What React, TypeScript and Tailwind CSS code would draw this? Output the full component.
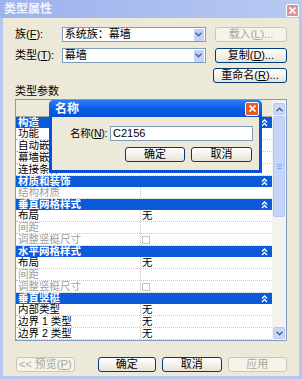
import React from "react";

const font = { fontFamily: '"Liberation Sans", "Noto Sans CJK SC", sans-serif' };

function Key({ k }: { k: string }) {
  return (
    <>
      (<span className="underline">{k}</span>)
    </>
  );
}

function XPButton({
  children,
  disabled,
  className = "",
}: {
  children: React.ReactNode;
  disabled?: boolean;
  className?: string;
}) {
  return (
    <div
      className={
        "flex h-[15px] items-center justify-center whitespace-nowrap rounded-[3px] border text-[11px] leading-none " +
        (disabled
          ? "border-[#c9c7ba] bg-[#f5f4ea] text-[#aca899] "
          : "border-[#003c74] bg-gradient-to-b from-white to-[#e6e3d6] text-black ") +
        className
      }
    >
      {children}
    </div>
  );
}

function ChevronDown({ className = "" }: { className?: string }) {
  return (
    <svg width="7" height="5" viewBox="0 0 7 5" className={className}>
      <path d="M0.5 0.8 L3.5 3.8 L6.5 0.8" stroke="#4d6185" strokeWidth="1.4" fill="none" />
    </svg>
  );
}

function Combo({ value }: { value: string }) {
  return (
    <div className="flex h-[15px] w-[148px] items-center border border-[#7f9db9] bg-white">
      <span className="flex-1 whitespace-nowrap pl-[2px] text-[11px] leading-none">{value}</span>
      <div className="mr-px flex h-[12px] w-[10px] items-center justify-center rounded-[1px] bg-[#c1d3fb]">
        <ChevronDown />
      </div>
    </div>
  );
}

function Collapse() {
  return (
    <svg width="7" height="8" viewBox="0 0 7 8">
      <path d="M1 3.5 L3.5 1 L6 3.5 M1 7 L3.5 4.5 L6 7" stroke="white" strokeWidth="1.3" fill="none" />
    </svg>
  );
}

function Section({ title }: { title: string }) {
  return (
    <div className="flex h-[11px] shrink-0 items-center justify-between bg-[#0b5ad9] pl-[2px] pr-[4px] text-[10.5px] font-bold leading-none text-white">
      <span className="whitespace-nowrap">{title}</span>
      <Collapse />
    </div>
  );
}

function Row({
  name,
  value,
  gray,
  check,
}: {
  name: string;
  value?: string;
  gray?: boolean;
  check?: boolean;
}) {
  return (
    <div className="flex h-[12px] shrink-0 border-b border-dotted border-[#c8c8c8] bg-white text-[10.5px] leading-none">
      <div
        className={
          "flex w-[125px] items-center whitespace-nowrap border-r border-dotted border-[#c8c8c8] pl-[2px] " +
          (gray ? "text-[#a0a0a0]" : "text-black")
        }
      >
        {name}
      </div>
      <div className="flex flex-1 items-center pl-[1px]">
        {check ? (
          <div className="h-[8px] w-[8px] border border-[#c4c4c4] bg-white" />
        ) : (
          <span>{value}</span>
        )}
      </div>
    </div>
  );
}

function CloseGlyph() {
  return (
    <svg width="7" height="7" viewBox="0 0 7 7">
      <path d="M0.5 0.5 L6.5 6.5 M6.5 0.5 L0.5 6.5" stroke="white" strokeWidth="1.6" />
    </svg>
  );
}

export default function App() {
  return (
    <div
      className="relative flex h-[379px] w-[302px] flex-col overflow-hidden bg-[#ece9d8] text-black"
      style={font}
    >
      {/* title bar */}
      <div className="flex h-[18px] shrink-0 items-center justify-between bg-gradient-to-r from-[#9db3ea] via-[#a9bdf0] to-[#b8c9f2] pl-[4px] pr-[3px]">
        <span className="text-[12px] font-bold leading-none text-[#f0f4ff]">类型属性</span>
        <div className="mt-[2px] flex h-[13px] w-[13px] items-center justify-center rounded-[2px] border border-white bg-[#d29797]">
          <CloseGlyph />
        </div>
      </div>

      <div className="flex flex-1 flex-col border-x-[3px] border-b-[3px] border-[#b6c6ef] px-[12px]">
        {/* family row */}
        <div className="mt-[9px] flex h-[15px] items-center">
          <span className="w-[48px] whitespace-nowrap text-[11px] leading-none">
            族<Key k="F" />:
          </span>
          <Combo value="系统族：幕墙" />
          <XPButton disabled className="ml-[9px] w-[74px]">
            载入<Key k="L" />...
          </XPButton>
        </div>
        {/* type row */}
        <div className="mt-[6px] flex h-[15px] items-center">
          <span className="w-[48px] whitespace-nowrap text-[11px] leading-none">
            类型<Key k="T" />:
          </span>
          <Combo value="幕墙" />
          <XPButton className="ml-[9px] w-[74px]">
            复制<Key k="D" />...
          </XPButton>
        </div>
        <div className="mt-[5px] flex justify-end">
          <XPButton className="w-[74px]">
            重命名<Key k="R" />...
          </XPButton>
        </div>
        <div className="mt-[1px] text-[11px] leading-[14px]">类型参数</div>

        {/* property table */}
        <div className="mt-[1px] flex h-[242px] border border-[#7f9db9] bg-white">
          <div className="flex flex-1 flex-col overflow-hidden">
            <div className="flex h-[17px] shrink-0 border-b border-[#aca899] bg-[#ece9d8]">
              <div className="w-[125px] border-r border-[#d4d0c8]" />
              <div className="flex-1" />
            </div>
            <Section title="构造" />
            <Row name="功能" />
            <Row name="自动嵌入" />
            <Row name="幕墙嵌板" />
            <Row name="连接条件" />
            <Section title="材质和装饰" />
            <Row name="结构材质" gray />
            <Section title="垂直网格样式" />
            <Row name="布局" value="无" />
            <Row name="间距" gray />
            <Row name="调整竖梃尺寸" gray check />
            <Section title="水平网格样式" />
            <Row name="布局" value="无" />
            <Row name="间距" gray />
            <Row name="调整竖梃尺寸" gray check />
            <Section title="垂直竖梃" />
            <Row name="内部类型" value="无" />
            <Row name="边界 1 类型" value="无" />
            <Row name="边界 2 类型" value="无" />
          </div>
          {/* scrollbar */}
          <div className="flex w-[14px] flex-col bg-[#f4f3ee] p-px">
            <div className="mt-[2px] flex h-[12px] items-center justify-center rounded-[2px] border border-[#b6c8f3] bg-[#c8d8fb]">
              <ChevronDown className="rotate-180" />
            </div>
            <div className="mt-px flex h-[101px] flex-col items-center justify-center gap-px rounded-[2px] border border-[#b6c8f3] bg-[#c4d4fb]">
              <div className="h-px w-[5px] bg-[#8eabea]" />
              <div className="h-px w-[5px] bg-[#8eabea]" />
              <div className="h-px w-[5px] bg-[#8eabea]" />
            </div>
            <div className="flex-1" />
            <div className="flex h-[12px] items-center justify-center rounded-[2px] border border-[#b6c8f3] bg-[#c8d8fb]">
              <ChevronDown />
            </div>
          </div>
        </div>

        {/* bottom buttons */}
        <div className="mt-[16px] flex items-center">
          <XPButton disabled className="ml-px w-[60px]">
            &lt;&lt; 预览<Key k="P" />
          </XPButton>
          <XPButton className="ml-[23px] w-[60px]">确定</XPButton>
          <XPButton className="ml-[6px] w-[61px]">取消</XPButton>
          <XPButton disabled className="ml-[6px] w-[61px]">
            应用
          </XPButton>
        </div>
      </div>

      {/* rename dialog */}
      <div className="absolute left-[49px] top-[100px] flex h-[73px] w-[213px] flex-col rounded-t-[5px] bg-[#0a4fd8]">
        <div className="flex h-[17px] shrink-0 items-center justify-between rounded-t-[5px] bg-gradient-to-b from-[#2f7cf5] via-[#0a5fe6] to-[#0450d6] pl-[6px] pr-[3px]">
          <span className="text-[12px] font-bold leading-none text-white">名称</span>
          <div className="flex h-[14px] w-[14px] items-center justify-center rounded-[2px] border border-white bg-[#e35b2e]">
            <CloseGlyph />
          </div>
        </div>
        <div className="mx-[3px] mb-[3px] flex flex-1 flex-col bg-[#ece9d8]">
          <div className="mt-[9px] flex h-[15px] items-center">
            <span className="ml-[18px] w-[40px] whitespace-nowrap text-[10.5px] leading-none tracking-[-0.2px]">
              名称<Key k="N" />:
            </span>
            <div className="flex h-[15px] w-[143px] items-center border border-[#7f9db9] bg-white pl-[2px] text-[11px] leading-none">
              C2156
            </div>
          </div>
          <div className="mt-[6px] flex">
            <XPButton className="ml-[73px] w-[60px]">确定</XPButton>
            <XPButton className="ml-[6px] w-[61px]">取消</XPButton>
          </div>
        </div>
      </div>
    </div>
  );
}
